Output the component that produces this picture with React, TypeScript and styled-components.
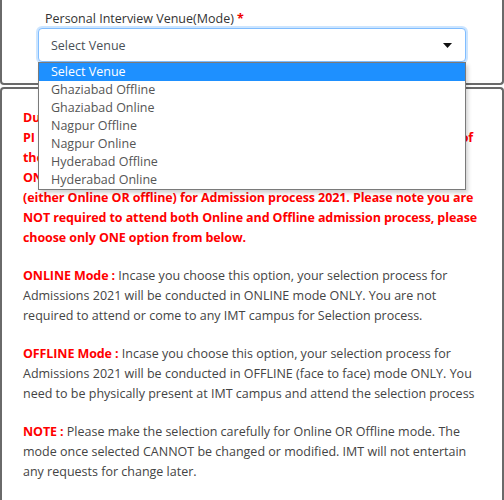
import React from "react";
import styled, { createGlobalStyle } from "styled-components";

const Global = createGlobalStyle`
  html, body { margin: 0; padding: 0; background: #fff; }
  body { font-family: "Open Sans", "Noto Sans", Arial, sans-serif; overflow: hidden; }
`;

const Page = styled.div`
  width: 504px;
  display: flex;
  flex-direction: column;
  gap: 2px;
`;

const TopPanel = styled.section`
  border: 2px solid #6a6a6a;
  border-top: none;
  border-radius: 0 0 4px 4px;
  height: 85px;
  padding: 11px 36px 0 36px;
  box-sizing: border-box;
`;

const FormGroup = styled.div`
  position: relative;
  display: flex;
  flex-direction: column;
  gap: 1px;
`;

const Label = styled.label`
  font-size: 12.5px;
  color: #333;
  padding-left: 7px;
  line-height: 16px;
`;

const Req = styled.span`
  color: #e00;
  font-weight: 700;
`;

const SelectBox = styled.div`
  height: 34px;
  box-sizing: border-box;
  border: 1px solid #80bdff;
  border-radius: 4px;
  box-shadow: 0 0 0 2px rgba(0, 123, 255, 0.2);
  display: flex;
  align-items: center;
  justify-content: space-between;
  padding: 0 13px 0 12px;
  font-size: 12.5px;
  color: #495057;
  background: #fff;
`;

const Caret = styled.svg`
  width: 9px;
  height: 5px;
  fill: #111;
`;

const OptionList = styled.ul`
  position: absolute;
  left: 0;
  right: 0;
  top: 51px;
  margin: 0;
  padding: 0;
  list-style: none;
  border: 1px solid #7a7a7a;
  background: #fff;
  box-shadow: 2px 3px 4px rgba(0, 0, 0, 0.18);
  z-index: 5;
`;

const OptionItem = styled.li<{ $active?: boolean }>`
  height: 18px;
  line-height: 18px;
  padding-left: 12px;
  font-size: 12.5px;
  color: ${(p) => (p.$active ? "#fff" : "#555")};
  background: ${(p) => (p.$active ? "#1e90ff" : "#fff")};
`;

const BottomPanel = styled.section`
  border: 2px solid #6a6a6a;
  border-bottom: none;
  border-radius: 4px 4px 0 0;
  padding: 19px 10px 0 21px;
  height: 420px;
  box-sizing: border-box;
  font-size: 12.5px;
  line-height: 20px;
  color: #444;
`;

const Para = styled.p`
  margin: 0 0 18px 0;
`;

const Alert = styled.span`
  color: #f00;
  font-weight: 700;
  letter-spacing: -0.1px;
`;

const options = [
  "Select Venue",
  "Ghaziabad Offline",
  "Ghaziabad Online",
  "Nagpur Offline",
  "Nagpur Online",
  "Hyderabad Offline",
  "Hyderabad Online",
];

export default function App() {
  return (
    <Page>
      <Global />
      <TopPanel>
        <FormGroup>
          <Label>
            Personal Interview Venue(Mode) <Req>*</Req>
          </Label>
          <SelectBox>
            <span>Select Venue</span>
            <Caret viewBox="0 0 9 5">
              <path d="M0 0 L9 0 L4.5 5 Z" />
            </Caret>
          </SelectBox>
          <OptionList>
            {options.map((o, i) => (
              <OptionItem key={o} $active={i === 0}>
                {o}
              </OptionItem>
            ))}
          </OptionList>
        </FormGroup>
      </TopPanel>
      <BottomPanel>
        <Para>
          <Alert>
            Due to the current COVID-19 pandemic situation, the GD/
            <br />
            PI process shall be conducted in Online as well as Offline mode, in view of
            <br />
            the safety of candidates. Candidates are requested to select
            <br />
            ONLY ONE mode of PI as per their preference
            <br />
            (either Online OR offline) for Admission process 2021. Please note you are
            <br />
            NOT required to attend both Online and Offline admission process, please
            <br />
            choose only ONE option from below.
          </Alert>
        </Para>
        <Para>
          <Alert>ONLINE Mode :</Alert> Incase you choose this option, your selection
          process for
          <br />
          Admissions 2021 will be conducted in ONLINE mode ONLY. You are not
          <br />
          required to attend or come to any IMT campus for Selection process.
        </Para>
        <Para>
          <Alert>OFFLINE Mode :</Alert> Incase you choose this option, your selection
          process for
          <br />
          Admissions 2021 will be conducted in OFFLINE (face to face) mode ONLY. You
          <br />
          need to be physically present at IMT campus and attend the selection process
        </Para>
        <Para>
          <Alert>NOTE :</Alert> Please make the selection carefully for Online OR Offline
          mode. The
          <br />
          mode once selected CANNOT be changed or modified. IMT will not entertain
          <br />
          any requests for change later.
        </Para>
      </BottomPanel>
    </Page>
  );
}
